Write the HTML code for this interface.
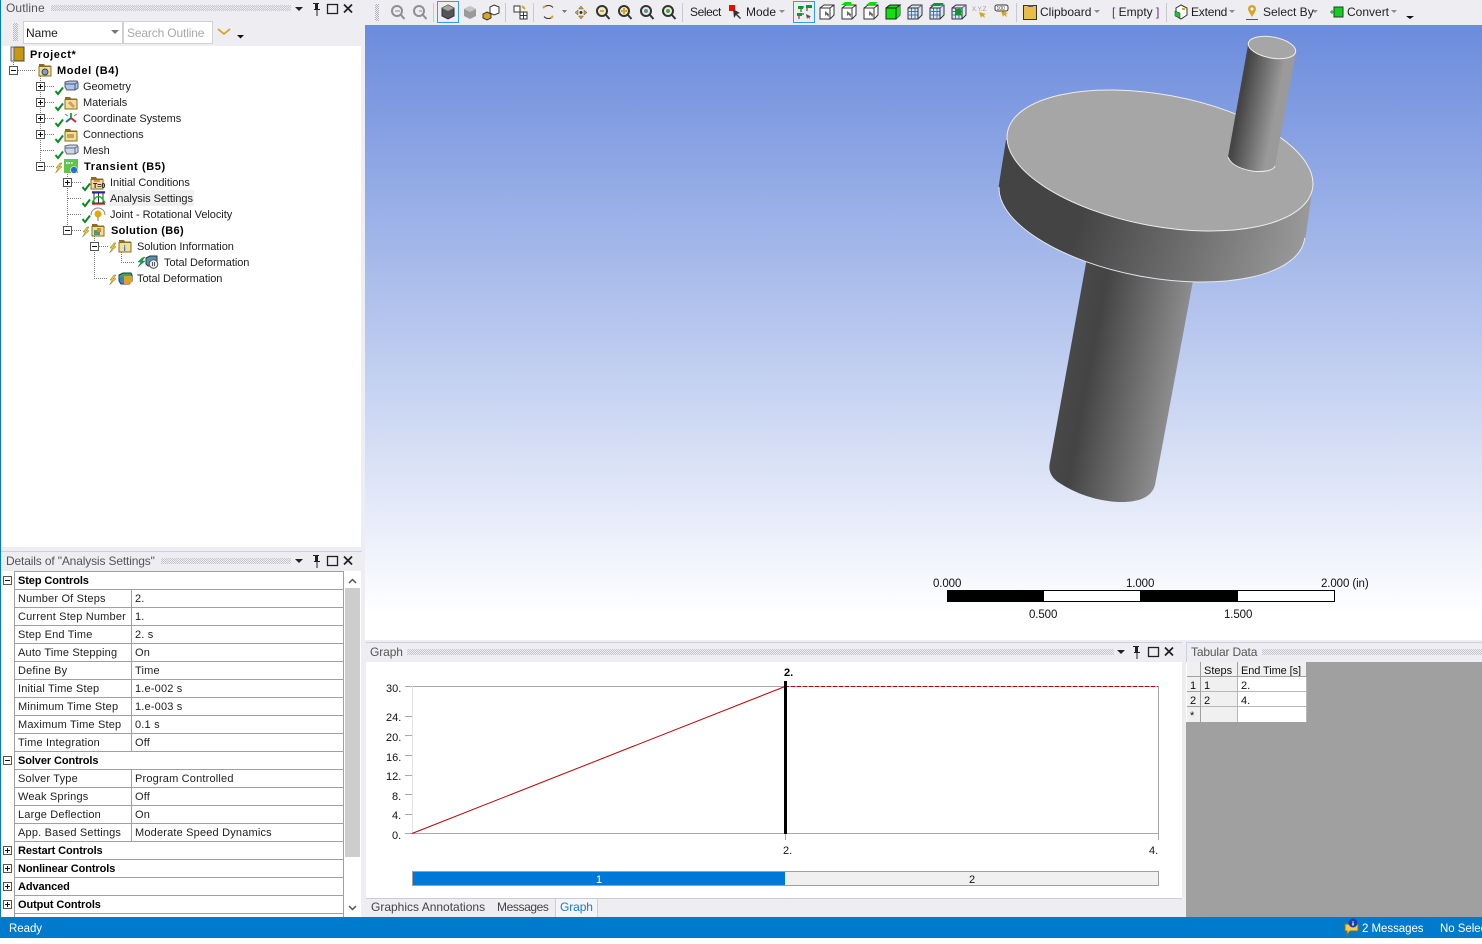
<!DOCTYPE html>
<html><head><meta charset="utf-8"><title>Mechanical</title>
<style>
html,body{margin:0;padding:0;background:#fff}
body{position:relative;width:1482px;height:944px;overflow:hidden;font-family:"Liberation Sans",sans-serif;font-size:11px;color:#1e1e1e}
.a{position:absolute}
.t{position:absolute;white-space:nowrap;line-height:18px;letter-spacing:-.05px}
.b{font-weight:bold;color:#000;letter-spacing:.6px}
.hd{position:absolute;height:19px;background:#eeeef2;border-top:1px solid #ccd0e0;box-sizing:border-box}
.ti{position:absolute;left:5px;top:0;line-height:17px;font-size:12px;color:#555;white-space:nowrap}
.gr{position:absolute;top:5px;height:6px;background:repeating-conic-gradient(#c6c6ce 0 25%,transparent 0 50%) 0 0/2px 2px}
.tb{position:absolute;top:4px;line-height:16px;font-size:12px;white-space:nowrap;color:#1e1e1e}
.sep{position:absolute;top:3px;width:1px;height:19px;background:#c8c8d0}
table.d{position:absolute;left:14px;top:571px;width:330px;border-collapse:separate;border-spacing:0;table-layout:fixed;border-top:1px solid #a0a0a0;border-left:1px solid #a0a0a0;border-right:1px solid #a0a0a0;font-size:11px}
table.d td{height:18px;box-sizing:border-box;border-bottom:1px solid #a0a0a0;padding:1px 0 0 3px;white-space:nowrap;overflow:hidden;letter-spacing:.18px;color:#1e1e1e;line-height:15px}
table.d td.k{border-right:1px solid #a0a0a0}
table.d td.g{font-weight:bold;color:#000;letter-spacing:-.1px}
.ax{position:absolute;line-height:16px;color:#111;font-size:11px;white-space:nowrap}
.sc{position:absolute;font-size:11.5px;line-height:16px;color:#111;white-space:nowrap;letter-spacing:-.1px}
.tab{position:absolute;top:899px;line-height:17px;font-size:12px;color:#444;white-space:nowrap}
.c{position:absolute;box-sizing:border-box;font-size:11px;line-height:19px;padding-left:3px;color:#111;white-space:nowrap;overflow:hidden}
</style></head>
<body>
<svg width="0" height="0" style="position:absolute">
<defs>
<g id="ck"><path d="M0.5 4 L3 7 L8 0.5" fill="none" stroke="#0a8a1e" stroke-width="2"/></g>
<g id="bolt"><path d="M5 0 L1 5 L3.5 5 L0.5 10 L7 3.8 L4.4 3.8 L7 0Z" fill="#f0d020" stroke="#7a6a10" stroke-width=".5"/></g>
<g id="folder"><path d="M1 2 H6 L7 3.5 H13 V5 H1Z" fill="#8a6d1f"/><rect x="1" y="4.5" width="12" height="9.5" fill="#f4dd9b" stroke="#8a6d1f"/></g>
<g id="min"><rect x=".5" y=".5" width="8" height="8" fill="#fff" stroke="#555"/><path d="M2 4.5H7" stroke="#111"/></g>
<g id="plus"><rect x=".5" y=".5" width="8" height="8" fill="#fff" stroke="#555"/><path d="M2 4.5H7M4.5 2V7" stroke="#111"/></g>
<g id="cube"><path d="M1 5 L5 2 H15 V12 L11 16 H1Z" fill="#fff" stroke="#333" stroke-width="1"/><path d="M1 5H11V16M11 5L15 2" fill="none" stroke="#333"/><path d="M6 8 L6 13 L7.5 11.5 L9.5 14 L10 11 Z" fill="#666"/></g>
<g id="grid"><path d="M1 5 L5 2 H15 V12 L11 16 H1Z" fill="#dbe6f5" stroke="#333"/><path d="M1 8.5H11M1 12H11M4.5 5V16M8 5V16M11 5V16M11 5L15 2" fill="none" stroke="#4477aa"/><path d="M1 5H11V16" fill="none" stroke="#333"/></g>
<g id="pcl"><path d="M-4 -4L4 4M4 -4L-4 4" stroke="#222" stroke-width="1.800" fill="none"/></g>
<linearGradient id="gDisc" gradientUnits="userSpaceOnUse" x1="1000" y1="200" x2="1305" y2="240"><stop offset="0" stop-color="#444"/><stop offset=".28" stop-color="#444"/><stop offset="1" stop-color="#999"/></linearGradient>
<linearGradient id="gUp" gradientUnits="userSpaceOnUse" x1="1228" y1="100" x2="1276" y2="109"><stop offset="0" stop-color="#505050"/><stop offset=".25" stop-color="#444"/><stop offset="1" stop-color="#9a9a9a"/></linearGradient>
<linearGradient id="gLo" gradientUnits="userSpaceOnUse" x1="1055" y1="380" x2="1172" y2="402"><stop offset="0" stop-color="#4a4a4a"/><stop offset=".27" stop-color="#444"/><stop offset="1" stop-color="#8e8e8e"/></linearGradient>
</defs>
</svg>

<!-- backgrounds -->
<div class="a" style="left:0;top:0;width:1482px;height:917px;background:#eeeef2"></div>
<div class="a" style="left:0;top:0;width:1px;height:917px;background:#007acc"></div>
<div class="a" style="left:1px;top:46px;width:360px;height:501px;background:#fff"></div>
<div class="a" style="left:365px;top:25px;width:1117px;height:615px;background:linear-gradient(#6b8bdc 0,#fff 96%)"></div>

<!-- 3D model -->
<svg class="a" style="left:365px;top:25px" width="1117" height="615" viewBox="365 25 1117 615">
<path d="M1092 230 L1050 462 Q1047 474 1058 482 Q1085 500 1118 502 Q1150 503 1155 485 L1195 270Z" fill="url(#gLo)"/>
<ellipse cx="1152" cy="211.5" rx="155.1" ry="65.7" transform="rotate(10.5 1152 211.5)" fill="url(#gDisc)" stroke="#e4e8ee" stroke-width="1"/>
<path d="M1006 140 L998.500 187 L1305.500 238 L1312 192Z" fill="url(#gDisc)"/>
<ellipse cx="1160" cy="160.5" rx="155.1" ry="65.7" transform="rotate(10.5 1160 160.5)" fill="#a6a6a6" stroke="#ececec" stroke-width="1"/>
<path d="M1248 45 L1228 157 Q1232 168 1255 171.500 Q1273 172 1275 166 L1296 52Z" fill="url(#gUp)"/>
<path d="M1228 157 Q1232 168 1255 171.500 Q1273 172 1275 166" fill="none" stroke="#ececec"/>
<ellipse cx="1272" cy="47.500" rx="24" ry="10.500" transform="rotate(10.500 1272 47.500)" fill="#a6a6a6" stroke="#ececec"/>
</svg>

<!-- scale -->
<div class="a" style="left:947px;top:590px;width:388px;height:12px;background:#fff;box-sizing:border-box;border:1px solid #000"></div>
<div class="a" style="left:947px;top:590px;width:97px;height:12px;background:#000"></div>
<div class="a" style="left:1140px;top:590px;width:98px;height:12px;background:#000"></div>
<span class="sc" style="left:933px;top:576px">0.000</span>
<span class="sc" style="left:1126px;top:576px">1.000</span>
<span class="sc" style="left:1321px;top:576px">2.000 (in)</span>
<span class="sc" style="left:1029px;top:607px">0.500</span>
<span class="sc" style="left:1224px;top:607px">1.500</span>

<!-- Toolbar -->
<div class="a" style="left:375px;top:4px;width:4px;height:17px;background:repeating-conic-gradient(#b4b4bc 0 25%,transparent 0 50%) 0 0/2px 2px"></div>
<svg class="a" style="left:365px;top:0" width="1117" height="25" viewBox="365 0 1117 25">
<g fill="none" stroke="#8f8f8f" stroke-width="2"><circle cx="397" cy="11" r="5"/><path d="M401 15l3.500 4"/><circle cx="419" cy="11" r="5"/><path d="M423 15l3.500 4"/></g>
<path d="M395 11h5M419 11h3" stroke="#bbb" stroke-width="2"/>
<rect x="437.500" y="1.500" width="21" height="21" fill="none" stroke="#3399ff"/>
<path d="M448 5l6 3v8l-6 3-6-3V8Z" fill="#555" stroke="#333"/><path d="M442 8l6 3 6-3-6-3Z" fill="#a5a5a5"/>
<path d="M470 6l6 3v7l-6 3-6-3V9Z" fill="#9a9a9a"/><path d="M464 9l6 3 6-3-6-3Z" fill="#c5c5c5"/>
<path d="M494 5l5 2v6l-5 2-4-2V7Z" fill="#fff" stroke="#333"/><path d="M487 12l4 2v4l-4 2-4-2v-4Z" fill="#d9a520" stroke="#333"/>
<rect x="514" y="6" width="6" height="6" fill="#fff" stroke="#333"/><rect x="520" y="12" width="7" height="7" fill="#fff" stroke="#333"/><path d="M520 12h7v3.500h-7zM523.500 12v7" fill="none" stroke="#333"/><path d="M522 6l3 3" stroke="#d9a520" stroke-width="2"/>
<path d="M544 7.500a6 6 0 0 1 9 0M553 16.500a6 6 0 0 1-9 0" fill="none" stroke="#333"/><path d="M543 8l2-2M553 16l-2 2" stroke="#d9a520" stroke-width="2"/>
<path d="M562 10h5l-2.500 3z" fill="#777"/>
<path d="M581 6l2.500 3h-5zM581 19l2.500-3h-5zM575 12.500l3-2.500v5zM587 12.500l-3-2.500v5z" fill="#d9a520" stroke="#555" stroke-width=".5"/><circle cx="581" cy="12.500" r="1.500" fill="#333"/>
<g fill="#efe9d0" stroke="#333" stroke-width="2"><circle cx="602" cy="11" r="5"/><circle cx="624" cy="11" r="5"/><circle cx="646" cy="11" r="5"/><circle cx="668" cy="11" r="5"/></g>
<path d="M606 15l3.500 4M628 15l3.500 4M650 15l3.500 4M672 15l3.500 4" stroke="#333" stroke-width="2"/>
<path d="M600 11h4" stroke="#d9a520" stroke-width="2"/><path d="M621 11h6M624 8v6" stroke="#d9a520" stroke-width="2"/><circle cx="646" cy="11" r="2" fill="#5588cc"/><circle cx="668" cy="11" r="2" fill="#33aa55"/>
<rect x="729" y="5" width="6" height="6" fill="#ff0000"/><path d="M733 9l1 9 2-3 4 4 1-1-4-4 3-1Z" fill="#333"/>
<rect x="793.500" y="1.500" width="21" height="21" fill="none" stroke="#3399ff"/>
<g fill="none" stroke="#333"><path d="M798 7h6M801 7v5M807 6h5M807 6v5M798 14h6M799 14v5"/></g><path d="M798 6h5v3h-5zM806 5h6v3h-6zM797 13h5v3h-5z" fill="#0b9a2a"/><path d="M806 14l1 5 1-1.500 2 1.500-.5-2 1.500-.5Z" fill="#555"/>
<use href="#cube" x="819" y="3"/><use href="#cube" x="841" y="3"/><path d="M841 5l4-3h6v3z" fill="#00e000"/>
<use href="#cube" x="863" y="3"/><path d="M866 5l4-3h8l-4 3z" fill="#00e000"/>
<use href="#cube" x="885" y="3"/><path d="M886 8h10v11h-10zM896 8l4-3v10l-4 4z M886 8l4-3h10l-4 3z" fill="#10e010"/><path d="M886 8h10v11h-10zM896 8l4-3h-10l-4 3" fill="none" stroke="#222"/>
<use href="#grid" x="907" y="3"/><use href="#grid" x="929" y="3"/><path d="M930 6l4-3h10l-4 3z" fill="#0b9a2a"/><use href="#grid" x="951" y="3"/><path d="M955 9h6v6h-6z" fill="#0b9a2a"/>
<text x="972" y="11" font-size="6" fill="#9a9a9a" font-family="Liberation Sans">X.Y.Z</text>
<path d="M979 12l2 6 1-2 3 2-1-3 2-1Z" fill="#d9a520"/>
<rect x="995" y="5" width="13" height="6" rx="2" fill="#fff" stroke="#333"/><text x="996.500" y="10" font-size="5" fill="#333" font-family="Liberation Sans">100</text><path d="M1001 11l2 6 1-2 3 2-1-3 2-1Z" fill="#d9a520"/>
<rect x="1023.500" y="5.500" width="13" height="14" fill="#e8be48" stroke="#333"/><path d="M1028 5h5v2h-5z" fill="#555"/>
<path d="M1181 5l6 3v7l-6 4-5-3V8Z" fill="#fff" stroke="#333"/><path d="M1175 11l5 2v5l-5-2Z" fill="#11cc22" stroke="#333" stroke-width=".5"/><path d="M1182 9h3" stroke="#d9a520" stroke-width="2"/>
<circle cx="1252" cy="9" r="4" fill="#d9a520"/><path d="M1249 12l3 5 3-5Z" fill="#d9a520"/><circle cx="1252" cy="9" r="1.500" fill="#fff"/><path d="M1246 19.500h12" stroke="#555"/>
<path d="M1330 12h4M1332 10v4" stroke="#0b9a2a"/><path d="M1334 7h9v10h-9z" fill="#10d020" stroke="#333"/>
<g fill="#8a8a8a"><path d="M779 10h6l-3 3zM1094 10h6l-3 3zM1229 10h6l-3 3zM1312 10h6l-3 3zM1391 10h6l-3 3z"/></g>
<path d="M1406 16h8l-4 3z" fill="#111"/>
</svg>
<div class="sep" style="left:433px"></div><div class="sep" style="left:505px"></div><div class="sep" style="left:533px"></div><div class="sep" style="left:682px"></div><div class="sep" style="left:1016px"></div><div class="sep" style="left:1166px"></div>
<span class="tb" style="left:690px;letter-spacing:-.4px">Select</span>
<span class="tb" style="left:746px">Mode</span>
<span class="tb" style="left:1040px">Clipboard</span>
<span class="tb" style="left:1112px"><span style="color:#5b2a86">[</span> Empty <span style="color:#5b2a86">]</span></span>
<span class="tb" style="left:1191px;letter-spacing:-.2px">Extend</span>
<span class="tb" style="left:1263px">Select By</span>
<span class="tb" style="left:1347px">Convert</span>

<!-- Outline header -->
<div class="hd" style="left:1px;top:0;width:361px;height:18px;border-top:none"><span class="ti" style="left:5px;letter-spacing:.1px">Outline</span><div class="gr" style="left:50px;width:240px;top:5px"></div></div>
<svg class="a" style="left:290px;top:0" width="72" height="18" viewBox="290 0 72 18">
<path d="M295 7h8l-4 4z" fill="#222"/>
<path d="M313 3h6v1h-1v5h2v1h-2.500v6h-1v-6H314V9h1V4h-2Z" fill="#222"/><rect x="327.500" y="4.500" width="10" height="9" fill="none" stroke="#222" stroke-width="1.300"/>
<use href="#pcl" x="348" y="8.500"/>
</svg>
<div class="a" style="left:13px;top:23px;width:5px;height:18px;background:repeating-conic-gradient(#b8b8c0 0 25%,transparent 0 50%) 0 0/2px 2px"></div>
<div class="a" style="left:23px;top:21px;width:100px;height:23px;background:#fff;border:1px solid #d0d0d8;box-sizing:border-box"></div>
<span class="t" style="left:26px;top:24px;font-size:12px">Name</span>
<svg class="a" style="left:110px;top:29px" width="10" height="6"><path d="M1 1h8l-4 4z" fill="#777"/></svg>
<div class="a" style="left:123px;top:21px;width:90px;height:23px;background:#fff;border:1px solid #d0d0d8;box-sizing:border-box"></div>
<span class="t" style="left:127px;top:24px;font-size:12px;color:#a8a8a8;letter-spacing:-.15px">Search Outline</span>
<svg class="a" style="left:216px;top:26px" width="30" height="16"><path d="M2 3l6 5 6-5" fill="none" stroke="#d9a530" stroke-width="1.800"/><path d="M21 9h7l-3.500 3.500z" fill="#111"/></svg>

<!-- Tree -->
<svg class="a" style="left:0;top:46px" width="300" height="245" viewBox="0 46 300 245">
<g fill="none" stroke="#777" stroke-dasharray="1 1">
<path d="M13.500 60V66M18 70.500H35M40.500 76V162M45 86.500H55M45 102.500H55M45 118.500H55M45 134.500H55M41 150.500H55M45 166.500H55M67.500 172V226M72 182.500H82M68 198.500H82M68 214.500H82M72 230.500H82M94.500 236V278.500H108M99 246.500H109M121.500 252V262.500H135"/>
</g>
<use href="#min" x="9" y="66"/><use href="#plus" x="36" y="82"/><use href="#plus" x="36" y="98"/><use href="#plus" x="36" y="114"/><use href="#plus" x="36" y="130"/><use href="#min" x="36" y="162"/><use href="#plus" x="63" y="178"/><use href="#min" x="63" y="226"/><use href="#min" x="90" y="242"/>
<rect x="11" y="47" width="13" height="14" fill="#c9970f" stroke="#444"/><rect x="11" y="47" width="3" height="14" fill="#ddd" stroke="#666"/>
<use href="#folder" x="38" y="62"/><circle cx="45" cy="72" r="3" fill="#7aa0c8" stroke="#444"/>
<use href="#ck" x="55" y="87"/><path d="M65 82l4-1h8l1 2v5l-3 2h-8l-2-3Z" fill="#a9c6e8" stroke="#557"/><path d="M65 84h10v6M75 84l3-2" fill="none" stroke="#557"/>
<use href="#ck" x="55" y="103"/><use href="#folder" x="64" y="95"/><path d="M69 102l5 5" stroke="#d69a6a" stroke-width="3"/>
<use href="#ck" x="55" y="119"/><path d="M71 113v5" stroke="#11bb33" stroke-width="2"/><path d="M71 118l-5 4" stroke="#2266cc" stroke-width="2"/><path d="M71 118l5 4" stroke="#dd2222" stroke-width="2"/><path d="M65 114l3 2M77 114l-3 2" stroke="#777"/>
<use href="#ck" x="55" y="135"/><use href="#folder" x="64" y="127"/><rect x="67" y="134" width="7" height="4" fill="#c9a750"/>
<use href="#ck" x="55" y="151"/><path d="M65 146l4-1h8l1 2v5l-3 2h-8l-2-3Z" fill="#c8d8ea" stroke="#667"/><path d="M65 148h10v6M75 148l3-2" fill="none" stroke="#667"/>
<use href="#bolt" x="55" y="163"/>
<rect x="64" y="159" width="14" height="14" fill="#5fc54b"/><path d="M66 163h7" stroke="#fff" stroke-dasharray="1.500 1" stroke-width="2"/><circle cx="74" cy="170" r="3.500" fill="#2f6ec8" stroke="#fff" stroke-width=".6"/>
<use href="#ck" x="82" y="183"/><use href="#folder" x="90" y="175"/><path d="M94 181h6" stroke="#c33"/><text x="93" y="188" font-size="7" font-weight="bold" fill="#222" font-family="Liberation Sans">T=0</text>
<use href="#ck" x="82" y="199"/><path d="M92 193H105M92 203H105M94 192V204M98.500 192V204M103 192V204" stroke="#333" fill="none"/><path d="M92 203Q98.500 190 105 203" stroke="#11bb33" fill="none" stroke-width="1.500"/><path d="M92 192h13" stroke="#2222cc" stroke-width="1.500"/><path d="M92 204h13" stroke="#dd2222" stroke-width="1.500"/>
<use href="#ck" x="82" y="215"/><path d="M91 215a7 7 0 0 1 14 0" fill="none" stroke="#888"/><circle cx="98" cy="214" r="3.500" fill="#e8a800"/><path d="M98 217v4" stroke="#777"/>
<use href="#bolt" x="82" y="227"/><use href="#folder" x="91" y="222"/><path d="M94 230h6v5h-6z" fill="#4c9c6a"/><path d="M97 228h4v4h-4z" fill="#d88b2b"/>
<use href="#bolt" x="109" y="243"/><use href="#folder" x="118" y="238"/><text x="123.500" y="251" font-size="8" font-weight="bold" fill="#2f6ec8" font-family="Liberation Sans">i</text>
<path d="M142 258l-4 4 3 0-3 5 7-6-3 0 3-4Z" fill="#11aa33" stroke="#055" stroke-width=".4"/>
<path d="M146 258l4-2h7v7l-3 3h-6l-2-2Z" fill="#4f97b5" stroke="#333"/><circle cx="153.500" cy="264" r="4.300" fill="#eee" stroke="#555"/><path d="M152.500 262v4M154.500 262v4" stroke="#555"/>
<use href="#bolt" x="109" y="275"/><path d="M119 275l4-2h8l1 2v6l-3 3h-8l-2-3Z" fill="#39a56a" stroke="#333"/><path d="M124 276h8v6l-3 2h-5Z" fill="#e0a020"/><path d="M119 277h5v6h-3z" fill="#3a7fc8"/>
</svg>
<span class="t b" style="left:30px;top:46px">Project*</span>
<span class="t b" style="left:57px;top:62px">Model (B4)</span>
<span class="t" style="left:83px;top:78px">Geometry</span>
<span class="t" style="left:83px;top:94px">Materials</span>
<span class="t" style="left:83px;top:110px">Coordinate Systems</span>
<span class="t" style="left:83px;top:126px">Connections</span>
<span class="t" style="left:83px;top:142px">Mesh</span>
<span class="t b" style="left:84px;top:158px">Transient (B5)</span>
<span class="t" style="left:110px;top:174px">Initial Conditions</span>
<div class="a" style="left:109px;top:190px;width:85px;height:16px;background:#f0f0f0"></div>
<span class="t" style="left:110px;top:190px">Analysis Settings</span>
<span class="t" style="left:110px;top:206px">Joint - Rotational Velocity</span>
<span class="t b" style="left:111px;top:222px;letter-spacing:.35px">Solution (B6)</span>
<span class="t" style="left:137px;top:238px">Solution Information</span>
<span class="t" style="left:164px;top:254px">Total Deformation</span>
<span class="t" style="left:137px;top:270px">Total Deformation</span>

<!-- Details -->
<div class="hd" style="left:1px;top:551px;width:361px;height:20px"><span class="ti" style="left:5px;top:1px;letter-spacing:-.15px">Details of "Analysis Settings"</span><div class="gr" style="left:160px;width:130px;top:6px"></div></div>
<svg class="a" style="left:290px;top:552px" width="72" height="18" viewBox="290 0 72 18">
<path d="M295 7h8l-4 4z" fill="#222"/>
<path d="M313 3h6v1h-1v5h2v1h-2.500v6h-1v-6H314V9h1V4h-2Z" fill="#222"/><rect x="327.500" y="4.500" width="10" height="9" fill="none" stroke="#222" stroke-width="1.300"/>
<use href="#pcl" x="348" y="8.500"/>
</svg>
<div class="a" style="left:1px;top:571px;width:360px;height:346px;background:#fff"></div>
<table class="d"><colgroup><col style="width:117px"><col></colgroup>
<tr><td class="g" colspan="2">Step Controls</td></tr>
<tr><td class="k">Number Of Steps</td><td>2.</td></tr>
<tr><td class="k">Current Step Number</td><td>1.</td></tr>
<tr><td class="k">Step End Time</td><td>2. s</td></tr>
<tr><td class="k">Auto Time Stepping</td><td>On</td></tr>
<tr><td class="k">Define By</td><td>Time</td></tr>
<tr><td class="k">Initial Time Step</td><td>1.e-002 s</td></tr>
<tr><td class="k">Minimum Time Step</td><td>1.e-003 s</td></tr>
<tr><td class="k">Maximum Time Step</td><td>0.1 s</td></tr>
<tr><td class="k">Time Integration</td><td>Off</td></tr>
<tr><td class="g" colspan="2">Solver Controls</td></tr>
<tr><td class="k">Solver Type</td><td>Program Controlled</td></tr>
<tr><td class="k">Weak Springs</td><td>Off</td></tr>
<tr><td class="k">Large Deflection</td><td>On</td></tr>
<tr><td class="k">App. Based Settings</td><td>Moderate Speed Dynamics</td></tr>
<tr><td class="g" colspan="2">Restart Controls</td></tr>
<tr><td class="g" colspan="2">Nonlinear Controls</td></tr>
<tr><td class="g" colspan="2">Advanced</td></tr>
<tr><td class="g" colspan="2">Output Controls</td></tr>
</table>
<div class="a" style="left:14px;top:914px;width:1px;height:3px;background:#a0a0a0"></div><div class="a" style="left:343px;top:914px;width:1px;height:3px;background:#a0a0a0"></div>
<svg class="a" style="left:0;top:571px" width="362" height="346" viewBox="0 571 362 346">
<use href="#min" x="3" y="576"/><use href="#min" x="3" y="756"/><use href="#plus" x="3" y="846"/><use href="#plus" x="3" y="864"/><use href="#plus" x="3" y="882"/><use href="#plus" x="3" y="900"/>
<rect x="345" y="588" width="15" height="269" fill="#cdcdcd"/>
<path d="M349 583l3.500-3.500 3.500 3.500M349 906l3.500 3.500 3.500-3.500" fill="none" stroke="#555" stroke-width="1.500"/>
</svg>

<!-- Graph -->
<div class="hd" style="left:366px;top:642px;width:816px;height:20px"><span class="ti" style="left:4px;top:1px;letter-spacing:-.1px">Graph</span><div class="gr" style="left:41px;width:707px;top:6px"></div></div>
<svg class="a" style="left:1110px;top:643px" width="72" height="18" viewBox="290 0 72 18">
<path d="M297 7h8l-4 4z" fill="#222"/>
<path d="M313 3h6v1h-1v5h2v1h-2.500v6h-1v-6H314V9h1V4h-2Z" fill="#222"/><rect x="328.500" y="4.500" width="10" height="9" fill="none" stroke="#222" stroke-width="1.300"/>
<use href="#pcl" x="349" y="8.500"/>
</svg>
<div class="a" style="left:366px;top:662px;width:816px;height:236px;background:#fff"></div>
<svg class="a" style="left:366px;top:662px" width="816" height="236" viewBox="366 662 816 236">
<path d="M405 686.500H1158.500V840M405 833.500H1158.500" fill="none" stroke="#a8a8a8"/>
<path d="M412.500 686V834" stroke="#e4e4e4"/>
<path d="M405 716.500h7M405 735.500h7M405 755.500h7M405 775.500h7M405 794.500h7M405 814.500h7M785.500 834v6" stroke="#a8a8a8"/>
<path d="M412 833.500L785 686.500" stroke="#c00000" fill="none"/>
<path d="M785 686.500H1158" stroke="#c00000" stroke-dasharray="4 2" fill="none"/>
<path d="M785.500 681V834" stroke="#000" stroke-width="3"/>
</svg>
<span class="ax" style="left:386px;top:681px">30.</span>
<span class="ax" style="left:386px;top:710px">24.</span>
<span class="ax" style="left:386px;top:730px">20.</span>
<span class="ax" style="left:386px;top:750px">16.</span>
<span class="ax" style="left:386px;top:769px">12.</span>
<span class="ax" style="left:392px;top:789px">8.</span>
<span class="ax" style="left:392px;top:808px">4.</span>
<span class="ax" style="left:392px;top:828px">0.</span>
<span class="ax" style="left:784px;top:665px;font-weight:bold;color:#000">2.</span>
<span class="ax" style="left:783px;top:843px">2.</span>
<span class="ax" style="left:1149px;top:843px">4.</span>
<div class="a" style="left:412px;top:871px;width:747px;height:15px;background:#f0f0f0;border:1px solid #a0a0a0;box-sizing:border-box"></div>
<div class="a" style="left:413px;top:872px;width:372px;height:13px;background:#0078d7"></div>
<span class="ax" style="left:596px;top:872px;color:#fff">1</span>
<span class="ax" style="left:969px;top:872px">2</span>
<div class="a" style="left:366px;top:898px;width:816px;height:1px;background:#ccccdb"></div>
<span class="tab" style="left:371px">Graphics Annotations</span>
<span class="tab" style="left:497px;letter-spacing:-.4px">Messages</span>
<div class="a" style="left:555px;top:898px;width:43px;height:19px;background:#f5f5f8;border:1px solid #ccccdb;box-sizing:border-box;border-bottom:none"></div>
<span class="tab" style="left:560px;color:#1c7ad0;letter-spacing:-.1px">Graph</span>

<!-- Tabular -->
<div class="hd" style="left:1186px;top:642px;width:296px;height:20px;border-left:1px solid #ccd0e0"><span class="ti" style="left:4px;top:1px;letter-spacing:-.15px">Tabular Data</span><div class="gr" style="left:75px;width:220px;top:6px"></div></div>
<div class="a" style="left:1186px;top:662px;width:296px;height:255px;background:#a0a0a0"></div>
<div class="a" style="left:1186px;top:662px;width:121px;height:60px;background:#fff"></div>
<div class="c" style="left:1187px;top:662px;width:14px;height:15px;background:#f0f0f0;border-right:1px solid #a0a0a0;border-bottom:1px solid #a0a0a0"></div>
<div class="c" style="left:1201px;top:662px;width:37px;height:15px;background:#f0f0f0;border-right:1px solid #a0a0a0;border-bottom:1px solid #a0a0a0">Steps</div>
<div class="c" style="left:1238px;top:662px;width:69px;height:15px;background:#f0f0f0;border-right:1px solid #a0a0a0;border-bottom:1px solid #a0a0a0;letter-spacing:-.1px">End Time [s]</div>
<div class="c" style="left:1187px;top:677px;width:14px;height:15px;background:#f0f0f0;border-right:1px solid #a0a0a0;border-bottom:1px solid #a0a0a0">1</div>
<div class="c" style="left:1201px;top:677px;width:37px;height:15px;background:#f0f0f0;border-right:1px solid #b8b8b8;border-bottom:1px solid #b8b8b8">1</div>
<div class="c" style="left:1238px;top:677px;width:69px;height:15px;border-bottom:1px solid #b8b8b8;border-right:1px solid #b8b8b8">2.</div>
<div class="c" style="left:1187px;top:692px;width:14px;height:15px;background:#f0f0f0;border-right:1px solid #a0a0a0;border-bottom:1px solid #a0a0a0">2</div>
<div class="c" style="left:1201px;top:692px;width:37px;height:15px;background:#f0f0f0;border-right:1px solid #b8b8b8;border-bottom:1px solid #b8b8b8">2</div>
<div class="c" style="left:1238px;top:692px;width:69px;height:15px;border-bottom:1px solid #b8b8b8;border-right:1px solid #b8b8b8">4.</div>
<div class="c" style="left:1187px;top:707px;width:14px;height:15px;background:#f0f0f0;border-right:1px solid #a0a0a0">*</div>
<div class="c" style="left:1201px;top:707px;width:37px;height:15px;background:#f0f0f0;border-right:1px solid #b8b8b8"></div>
<div class="c" style="left:1238px;top:707px;width:69px;height:15px;border-right:1px solid #b8b8b8"></div>

<!-- Status -->
<div class="a" style="left:0;top:917px;width:1482px;height:21px;background:#007acc"></div>
<span class="t" style="left:9px;top:920px;color:#fff;font-size:11.5px">Ready</span>
<svg class="a" style="left:1343px;top:918px" width="18" height="18"><path d="M2 6h13v7H7l-3 4v-4H2Z" fill="#f0cf50" stroke="#8a6d1f"/><circle cx="10" cy="5" r="4.500" fill="#1c3fb0"/><path d="M10 3v.6M10 4.500v3" stroke="#fff" stroke-width="1.300"/></svg>
<span class="t" style="left:1362px;top:920px;color:#fff;font-size:11.5px">2 Messages</span>
<span class="t" style="left:1440px;top:920px;color:#fff;font-size:11.5px">No Selection</span>
<div class="a" style="left:0;top:938px;width:1482px;height:6px;background:#fff"></div>
</body></html>
